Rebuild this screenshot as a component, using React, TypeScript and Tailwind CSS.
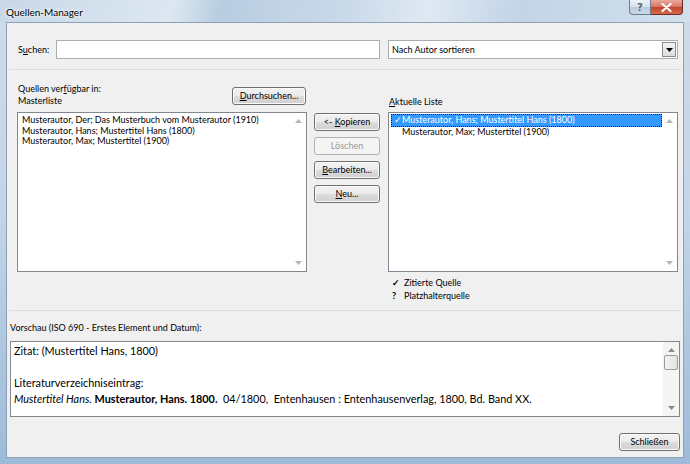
import type { ReactNode } from 'react'

const ui = "font-['Lato',sans-serif] text-[9px] leading-[12px] text-black"

const Btn = ({ children, disabled, className = '' }: { children: ReactNode; disabled?: boolean; className?: string }) => (
  <div
    className={
      'flex items-center justify-center rounded-[3px] border h-[18px] ' +
      (disabled
        ? 'border-[#adb2b5] bg-[#f4f4f4] text-[#9a9a9a] '
        : 'border-[#707070] bg-[linear-gradient(#f2f2f2_0%,#ebebeb_48%,#dddddd_50%,#cfcfcf_100%)] shadow-[inset_0_0_0_1px_#fbfbfb] ') +
      className
    }
  >
    {children}
  </div>
)

const Arrow = ({ down, color = '#a3a3a3' }: { down?: boolean; color?: string }) => (
  <svg width="7" height="4" viewBox="0 0 7 4">
    <path d={down ? 'M0 0h7L3.5 4z' : 'M0 4h7L3.5 0z'} fill={color} />
  </svg>
)

const ScrollBar = ({ thumb }: { thumb?: boolean }) => (
  <div className={'flex w-[16px] flex-col items-center justify-between py-[6px] ' + (thumb ? 'bg-[#f4f4f4]' : 'bg-white')}>
    <div className="flex flex-col items-center">
      <Arrow color={thumb ? '#8a8a8a' : '#b5b5b5'} />
      {thumb && (
        <div className="mt-[3px] h-[15px] w-[14px] rounded-[2px] border border-[#9c9c9c] bg-[linear-gradient(90deg,#f3f3f3,#e2e2e2)]" />
      )}
    </div>
    <Arrow down color={thumb ? '#8a8a8a' : '#b5b5b5'} />
  </div>
)

const Sep = ({ className = '' }: { className?: string }) => (
  <div className={'mx-[2px] h-[2px] border-t border-[#d9dee3] border-b-white ' + className} />
)

export default function App() {
  return (
    <div className="relative flex h-[464px] w-[690px] flex-col overflow-hidden bg-[linear-gradient(180deg,#cfdbe8_0%,#c3d5e8_45%,#9dbbd9_100%)]">
      {/* title bar */}
      <div className="flex h-[22px] items-start bg-[linear-gradient(100deg,#c8d8e8_0%,#dce7f1_25%,#b9cde1_32%,#c9d9e9_50%,#dfe9f3_62%,#c2d4e6_75%,#d2e0ed_100%)]">
        <div className={"pl-[6px] pt-[5px] font-['Lato',sans-serif] text-[10px] text-black [text-shadow:0_0_5px_#fff,0_0_3px_#fff]"}>
          Quellen-Manager
        </div>
        <div className="ml-auto mr-[7px] flex">
          <div className="flex h-[15px] w-[22px] items-center justify-center rounded-bl-[4px] border border-t-0 border-[#6b7d90] bg-[linear-gradient(#eef3f8_0%,#d5e0eb_50%,#bccbdb_51%,#cbd8e5_100%)] text-[10px] font-bold text-[#4a5560]">
            ?
          </div>
          <div className="flex h-[15px] w-[32px] items-center justify-center rounded-br-[4px] border border-l-0 border-t-0 border-[#6e2a20] bg-[linear-gradient(#e9a99b_0%,#d8735f_50%,#c3432c_51%,#d36b4f_100%)]">
            <svg width="11" height="9" viewBox="0 0 11 9">
              <path d="M1.5 1l8 7M9.5 1l-8 7" stroke="#fff" strokeWidth="2.2" strokeLinecap="round" />
            </svg>
          </div>
        </div>
      </div>

      {/* client area */}
      <div className={'mx-[6px] mb-[6px] flex flex-1 flex-col border border-[#8fa1b4] bg-[#f0f0f0] ' + ui}>
        {/* search row */}
        <div className="flex items-center pl-[10px] pt-[17px]">
          <div className="w-[39px] pl-[1px]">
            S<span className="underline">u</span>chen:
          </div>
          <div className="h-[19px] w-[324px] border border-[#abadb3] bg-white" />
          <div className="ml-[8px] flex h-[19px] w-[290px] items-center border border-[#abadb3] bg-white pl-[3px]">
            <span>Nach Autor sortieren</span>
            <div className="ml-auto mr-[1px] flex h-[15px] w-[14px] items-center justify-center border border-[#8c8c8c] bg-[linear-gradient(#f4f4f4,#dcdcdc)]">
              <svg width="7" height="4" viewBox="0 0 7 4">
                <path d="M0 0h7L3.5 4z" fill="#000" />
              </svg>
            </div>
          </div>
        </div>

        <Sep className="mt-[10px]" />

        {/* lists */}
        <div className="mt-[12px] flex pl-[10px]">
          <div className="flex w-[290px] flex-col">
            <div className="flex h-[29px] items-start">
              <div className="pl-[1px]">
                <div>
                  Quellen ver<span className="underline">f</span>ügbar in:
                </div>
                <div>Masterliste</div>
              </div>
              <Btn className="ml-auto mr-[1px] mt-[4px] w-[74px]">
                <span>
                  <span className="underline">D</span>urchsuchen...
                </span>
              </Btn>
            </div>
            <div className="flex h-[160px] border border-[#828790] bg-white">
              <div className="flex-1 pl-[4px] pt-[2px] leading-[10.6px]">
                <div>Musterautor, Der; Das Musterbuch vom Musterautor (1910)</div>
                <div>Musterautor, Hans; Mustertitel Hans (1800)</div>
                <div>Musterautor, Max; Mustertitel (1900)</div>
              </div>
              <ScrollBar />
            </div>
          </div>

          <div className="ml-[7px] mt-[30px] flex w-[66px] flex-col gap-[6px]">
            <Btn>
              <span>
                &lt;- <span className="underline">K</span>opieren
              </span>
            </Btn>
            <Btn disabled>Löschen</Btn>
            <Btn>
              <span>
                <span className="underline">B</span>earbeiten...
              </span>
            </Btn>
            <Btn>
              <span>
                <span className="underline">N</span>eu...
              </span>
            </Btn>
          </div>

          <div className="ml-[8px] flex w-[290px] flex-col">
            <div className="flex h-[29px] items-end pb-[4px]">
              <div className="pl-[1px]">
                <span className="underline">A</span>ktuelle Liste
              </div>
            </div>
            <div className="flex h-[160px] border border-[#828790] bg-white">
              <div className="flex-1 pl-[2px] pt-[1px] leading-[10.6px]">
                <div className="flex w-[271px] items-center border border-dotted border-[#1b1b1b] bg-[#3399ff] pl-[2px] text-white">
                  <span className="w-[8px]">✓</span>
                  <span>Musterautor, Hans; Mustertitel Hans (1800)</span>
                </div>
                <div className="pl-[11px]">Musterautor, Max; Mustertitel (1900)</div>
              </div>
              <ScrollBar />
            </div>
            <div className="mt-[4px] flex flex-col pl-[4px] leading-[13px]">
              <div className="flex">
                <span className="w-[12px] font-bold">✓</span>
                <span>Zitierte Quelle</span>
              </div>
              <div className="flex">
                <span className="w-[12px] font-bold">?</span>
                <span>Platzhalterquelle</span>
              </div>
            </div>
          </div>
        </div>

        <Sep className="mt-[8px]" />

        {/* preview */}
        <div className="mt-[10px] pl-[3px]">Vorschau (ISO 690 - Erstes Element und Datum):</div>
        <div className="mx-[3px] mt-[7px] flex h-[76px] border border-[#828790] bg-white">
          <div className="flex-1 pl-[3px] pt-[1px] font-['Lato',sans-serif] text-[10.85px] leading-[16px]">
            <div>Zitat: (Mustertitel Hans, 1800)</div>
            <div>&nbsp;</div>
            <div>Literaturverzeichniseintrag:</div>
            <div>
              <i>Mustertitel Hans.</i> <b>Musterautor, Hans. 1800.</b>&nbsp; 04/1800,&nbsp; Entenhausen : Entenhausenverlag, 1800, Bd. Band XX.
            </div>
          </div>
          <ScrollBar thumb />
        </div>

        <div className="mt-[16px] flex justify-end pr-[3px]">
          <Btn className="w-[61px]">Schließen</Btn>
        </div>
      </div>
    </div>
  )
}
